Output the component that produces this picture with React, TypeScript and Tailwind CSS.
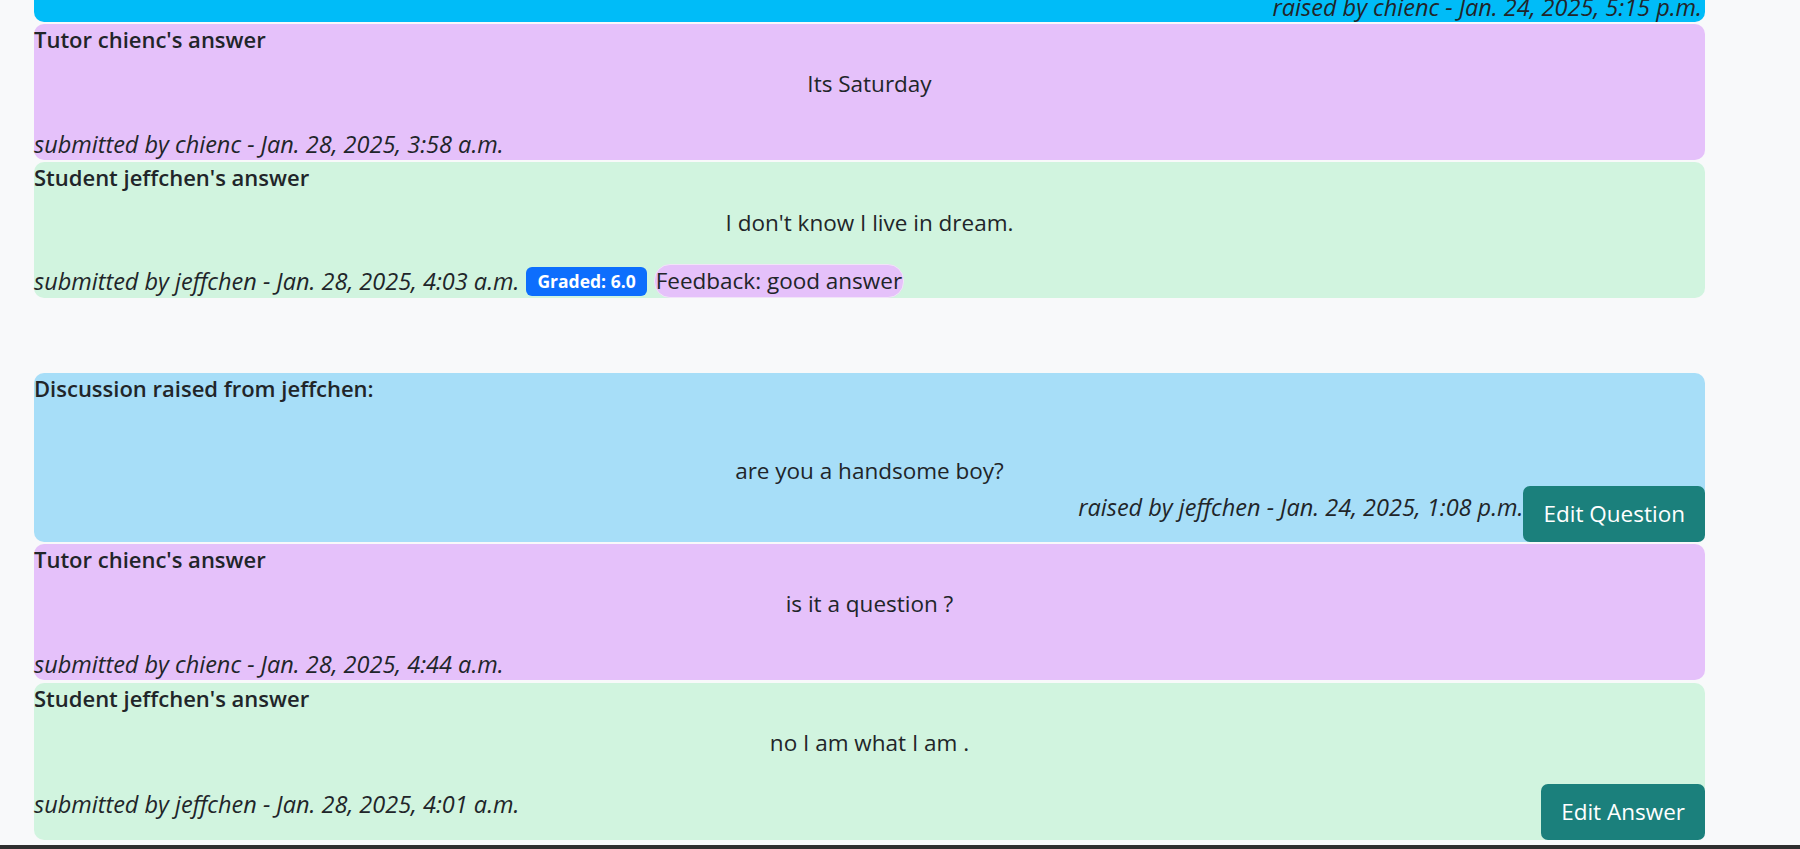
import React from "react";

function Btn({ children }: { children: React.ReactNode }) {
  return (
    <button className="h-[56px] shrink-0 rounded-[7px] bg-[#1b807c] px-[20px] text-[22.5px] leading-[34px] text-white">
      {children}
    </button>
  );
}

const title = "text-[22px] font-semibold leading-[30px]";
const body = "text-center text-[22.5px] leading-[30px]";
const meta = "text-[23.5px] italic leading-[30px]";

export default function App() {
  return (
    <div className="flex min-h-[849px] w-[1800px] flex-col overflow-hidden bg-[#f8f9fa] font-['Open_Sans',sans-serif] text-[22.5px] text-[#212529]">
      <div className="ml-[34px] w-[1671px]">
        {/* Top question card (partially visible) */}
        <div className="-mt-[7px] h-[29px] rounded-b-[10px] bg-[#00bcf8] pr-[3px] text-right text-[23.5px] italic leading-[28px]">
          raised by chienc - Jan. 24, 2025, 5:15 p.m.
        </div>

        {/* Tutor answer 1 */}
        <div className="mt-[2px] rounded-[10px] bg-[#e5c1fa] pb-[1px]">
          <div className={title}>Tutor chienc's answer</div>
          <div className={`mt-[15px] ${body}`}>Its Saturday</div>
          <div className={`mt-[30px] ${meta}`}>submitted by chienc - Jan. 28, 2025, 3:58 a.m.</div>
        </div>

        {/* Student answer 1 */}
        <div className="mt-[2px] rounded-[10px] bg-[#d1f4df]">
          <div className={title}>Student jeffchen's answer</div>
          <div className={`mt-[16px] ${body}`}>I don't know I live in dream.</div>
          <div className="mt-[26px] flex h-[34px] items-center">
            <span className={meta}>submitted by jeffchen - Jan. 28, 2025, 4:03 a.m.</span>
            <span className="ml-[7px] flex h-[29px] items-center rounded-[6px] bg-[#0d6efd] px-[11px] text-[17.5px] font-bold text-white">
              Graded: 6.0
            </span>
            <span className="ml-[7px] flex h-[34px] items-center rounded-[16px] border border-[#f1e4f8] bg-[#e5c1fa] px-[1px] text-[22.5px] leading-[30px]">
              Feedback: good answer
            </span>
          </div>
        </div>

        {/* Discussion 2 */}
        <div className="mt-[75px] rounded-[10px] bg-[#a7def8]">
          <div className={title}>Discussion raised from jeffchen:</div>
          <div className={`mt-[53px] ${body}`}>are you a handsome boy?</div>
          <div className="flex items-start justify-end">
            <span className={`mt-[6px] ${meta}`}>raised by jeffchen - Jan. 24, 2025, 1:08 p.m.</span>
            <Btn>Edit Question</Btn>
          </div>
        </div>

        {/* Tutor answer 2 */}
        <div className="mt-[2px] rounded-[10px] bg-[#e5c1fa] pb-[1px]">
          <div className={title}>Tutor chienc's answer</div>
          <div className={`mt-[15px] ${body}`}>is it a question ?</div>
          <div className={`mt-[30px] ${meta}`}>submitted by chienc - Jan. 28, 2025, 4:44 a.m.</div>
        </div>

        {/* Student answer 2 */}
        <div className="mt-[3px] rounded-[10px] bg-[#d1f4df]">
          <div className={title}>Student jeffchen's answer</div>
          <div className={`mt-[15px] ${body}`}>no I am what I am .</div>
          <div className="mt-[26px] flex items-start justify-between">
            <span className={`mt-[5px] ${meta}`}>submitted by jeffchen - Jan. 28, 2025, 4:01 a.m.</span>
            <Btn>Edit Answer</Btn>
          </div>
        </div>
      </div>
      <div className="mt-[5px] h-[4px] w-full bg-[#2f2f2f]" />
    </div>
  );
}
